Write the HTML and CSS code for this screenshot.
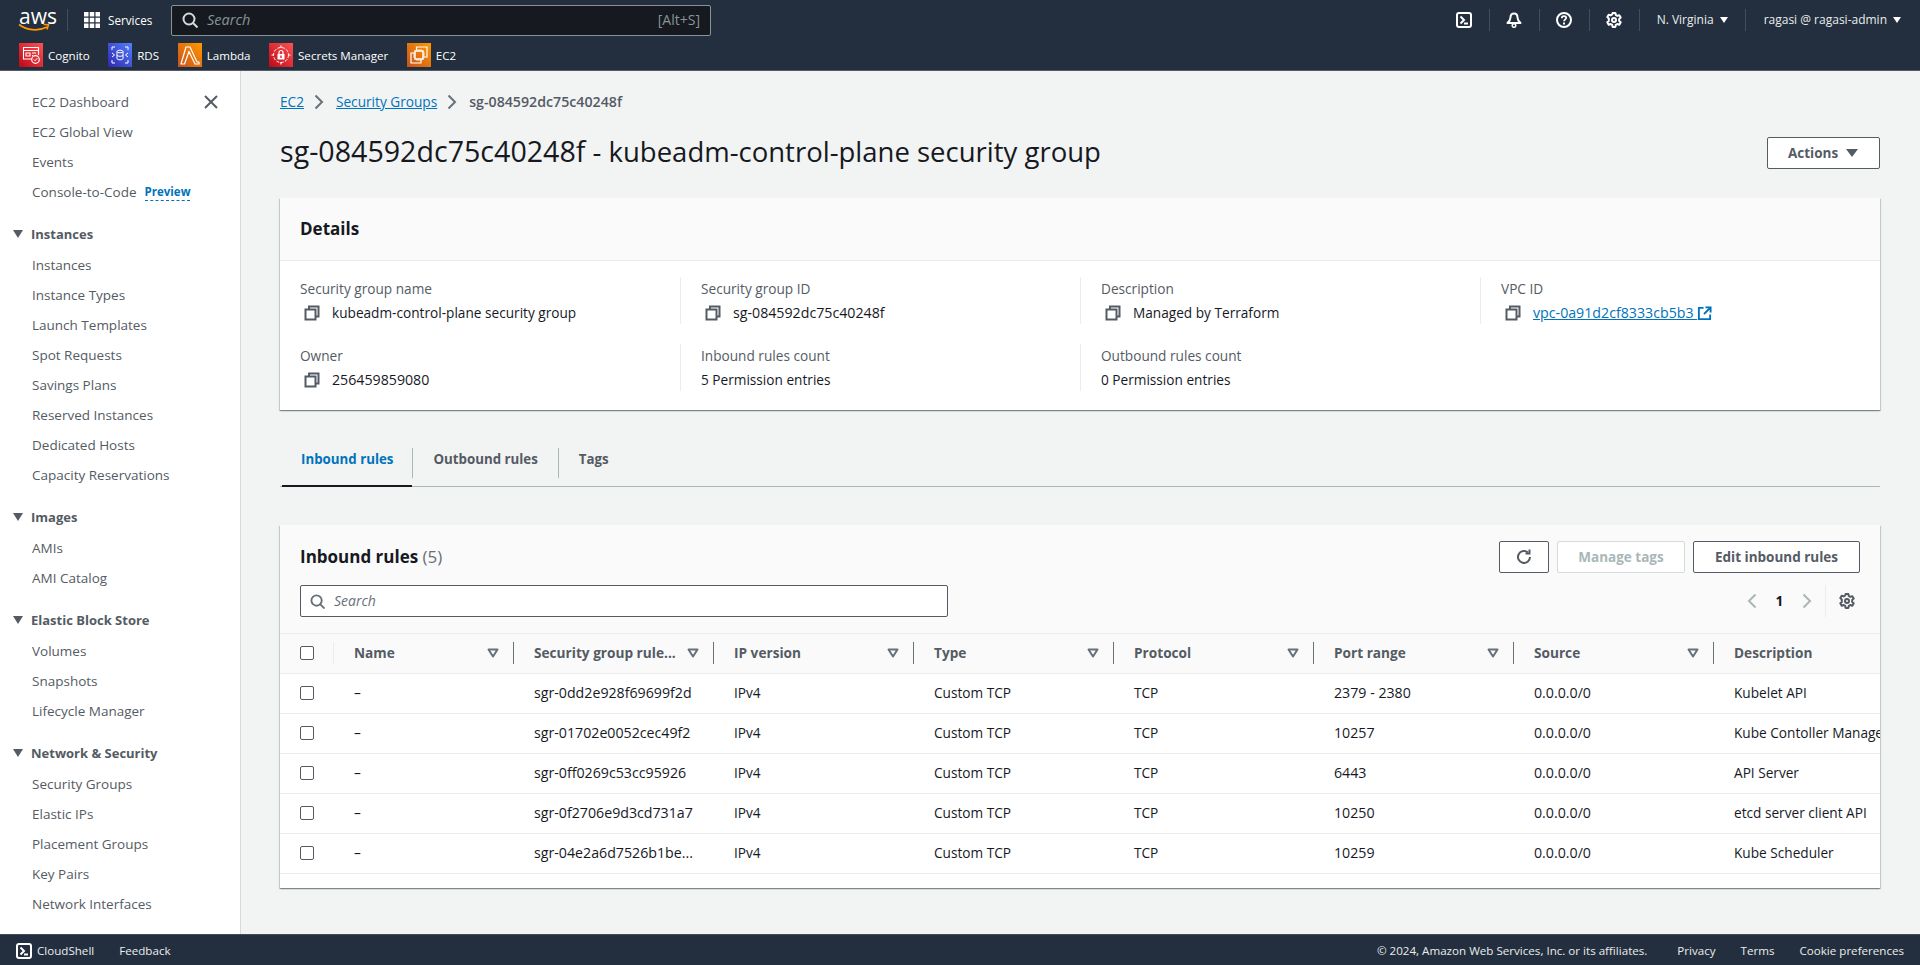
FILE: index.html
```html
<!DOCTYPE html>
<html lang="en">
<head>
  <meta charset="UTF-8" />
  <title>Security Group | EC2</title>
  <link rel="stylesheet" href="styles.css">
</head>
<body>

  <!-- shared icons -->
  <svg class="sprite" xmlns="http://www.w3.org/2000/svg">
    <symbol id="i-copy" viewBox="0 0 16 16"><path d="M5 4.500V1.500h9.500v10h-3M1.500 4.500h10v10h-10z" fill="none" stroke="currentColor" stroke-width="2"/></symbol>
    <symbol id="i-search" viewBox="0 0 16 16"><circle cx="7" cy="7" r="5.500" fill="none" stroke="currentColor" stroke-width="2"/><path d="M11 11l4.500 4.500" stroke="currentColor" stroke-width="2"/></symbol>
    <symbol id="i-gear" viewBox="0 0 16 16"><path d="M6.600 1h2.800l.4 2 1.500.9 2-.7 1.400 2.400-1.500 1.400v1.900l1.500 1.300-1.400 2.500-2-.7-1.500.9-.4 2H6.600l-.4-2-1.500-.9-2 .7-1.400-2.500 1.500-1.300V6.500L1.300 5.100l1.400-2.400 2 .7 1.500-.9z" fill="none" stroke="currentColor" stroke-width="2" stroke-linejoin="round"/><circle cx="8" cy="8" r="2" fill="none" stroke="currentColor" stroke-width="2"/></symbol>
    <symbol id="i-shell" viewBox="0 0 16 16"><rect x="1" y="1" width="14" height="14" rx="2" fill="none" stroke="currentColor" stroke-width="2"/><path d="M4.500 4.500L8 8l-3.500 3.500M8 11.500h4" fill="none" stroke="currentColor" stroke-width="2"/></symbol>
    <symbol id="i-sort" viewBox="0 0 12 10"><path d="M1.500 1.500h9L6 8.500z" fill="none" stroke="currentColor" stroke-width="2" stroke-linejoin="round"/></symbol>
  </svg>

  <header class="topbar">
    <div class="topbar-row">
      <a class="logo">
        <span class="logo-text">aws</span>
        <svg class="logo-smile" viewBox="0 0 32 9"><path d="M1 1.500c8 6 19 7 28 2.500" fill="none" stroke="#f90" stroke-width="1.800"/><path d="M25.500 1.500l5 .3-1.500 4.700" fill="none" stroke="#f90" stroke-width="1.500"/></svg>
      </a>
      <span class="top-divider logo-divider"></span>
      <a class="services">
        <svg class="grid-icon" viewBox="0 0 16 16"><g fill="#fff"><rect width="4.500" height="4.500"/><rect x="5.750" width="4.500" height="4.500"/><rect x="11.500" width="4.500" height="4.500"/><rect y="5.750" width="4.500" height="4.500"/><rect x="5.750" y="5.750" width="4.500" height="4.500"/><rect x="11.500" y="5.750" width="4.500" height="4.500"/><rect y="11.500" width="4.500" height="4.500"/><rect x="5.750" y="11.500" width="4.500" height="4.500"/><rect x="11.500" y="11.500" width="4.500" height="4.500"/></g></svg>
        Services
      </a>
      <div class="top-search">
        <svg class="top-search-icon"><use href="#i-search"/></svg>
        <span class="top-search-text">Search</span>
        <span class="top-search-key">[Alt+S]</span>
      </div>
      <div class="top-actions">
        <svg class="top-icon"><use href="#i-shell"/></svg>
        <span class="top-divider"></span>
        <svg class="top-icon" viewBox="0 0 16 16"><path d="M8 1.500c2.500 0 3.500 2 3.500 4 0 2 1 3.500 3 5.500h-13c2-2 3-3.500 3-5.500 0-2 1-4 3.500-4z" fill="none" stroke="#fff" stroke-width="2" stroke-linejoin="round"/><circle cx="8" cy="13.500" r="1.800" fill="none" stroke="#fff" stroke-width="1.500"/></svg>
        <span class="top-divider"></span>
        <svg class="top-icon" viewBox="0 0 16 16"><circle cx="8" cy="8" r="7" fill="none" stroke="#fff" stroke-width="2"/><path d="M5.800 6.200C5.800 4.900 6.800 4.200 8 4.200s2.200.7 2.200 1.900C10.200 7.500 8 7.600 8 9.300" fill="none" stroke="#fff" stroke-width="1.700"/><rect x="7" y="10.500" width="2" height="2" fill="#fff"/></svg>
        <span class="top-divider"></span>
        <svg class="top-icon"><use href="#i-gear"/></svg>
        <span class="top-divider"></span>
        <span class="top-menu region">N. Virginia <i class="caret"></i></span>
        <span class="top-divider"></span>
        <span class="top-menu user">ragasi @ ragasi-admin <i class="caret"></i></span>
      </div>
    </div>
    <div class="topbar-row favs">
      <a class="fav">
        <svg class="fav-icon" viewBox="0 0 24 24"><defs><linearGradient id="g-red" x1="0" y1="1" x2="1" y2="0"><stop offset="0" stop-color="#bd0816"/><stop offset="1" stop-color="#ff5252"/></linearGradient></defs><rect width="24" height="24" fill="url(#g-red)"/><path d="M13 16H4.500V4.500h15V12M4.500 7.500h15M7 10h4v3H7zM13 10h4M13 12.500h1" fill="none" stroke="#fff" stroke-width="1.100"/><circle cx="16.500" cy="16.500" r="3.800" fill="none" stroke="#fff" stroke-width="1.200"/><path d="M14.800 16.500l1.300 1.300 2.200-2.600" fill="none" stroke="#fff"/></svg>
        Cognito
      </a>
      <a class="fav">
        <svg class="fav-icon" viewBox="0 0 24 24"><defs><linearGradient id="g-blue" x1="0" y1="1" x2="1" y2="0"><stop offset="0" stop-color="#2e27ad"/><stop offset="1" stop-color="#527fff"/></linearGradient></defs><rect width="24" height="24" fill="url(#g-blue)"/><ellipse cx="12" cy="8.500" rx="3" ry="1.300" fill="none" stroke="#fff"/><path d="M9 8.500v7c0 1.700 6 1.700 6 0v-7M9 12c0 1.700 6 1.700 6 0M4 7V4h3M20 7V4h-3M4 17v3h3M20 17v3h-3M4 10L6.500 12 4 14M20 10l-2.500 2 2.500 2" fill="none" stroke="#fff"/></svg>
        RDS
      </a>
      <a class="fav">
        <svg class="fav-icon" viewBox="0 0 24 24"><defs><linearGradient id="g-orange" x1="0" y1="1" x2="1" y2="0"><stop offset="0" stop-color="#c8511b"/><stop offset="1" stop-color="#f90"/></linearGradient></defs><rect width="24" height="24" fill="url(#g-orange)"/><path d="M8 4h4l7 15h2v2h-4L11 8.500 6.500 21H3z" fill="none" stroke="#fff" stroke-width="1.200" stroke-linejoin="round"/></svg>
        Lambda
      </a>
      <a class="fav">
        <svg class="fav-icon" viewBox="0 0 24 24"><rect width="24" height="24" fill="url(#g-red)"/><circle cx="12" cy="12" r="7.500" fill="none" stroke="#fff" stroke-dasharray="3 1.500"/><rect x="8.500" y="11" width="7" height="5.500" fill="#fff"/><path d="M10 11V9.500a2 2 0 0 1 4 0V11M12 2.500v2.500M12 19v2.500M2.500 12H5M19 12h2.500" fill="none" stroke="#fff" stroke-width="1.200"/><rect x="11.300" y="12.500" width="1.400" height="2.500" fill="#d6242d"/></svg>
        Secrets Manager
      </a>
      <a class="fav">
        <svg class="fav-icon" viewBox="0 0 24 24"><rect width="24" height="24" fill="url(#g-orange)"/><path d="M9.500 7V4h10.500v10h-3M7 10H4v10h10v-3" fill="none" stroke="#fff" stroke-width="1.200"/><rect x="8" y="8" width="8" height="8" fill="none" stroke="#fff" stroke-width="1.500"/><path d="M10 6v2M12 6v2M14 6v2M10 16v2M12 16v2M14 16v2M6 10h2M6 12h2M6 14h2M16 10h2M16 12h2M16 14h2" stroke="#fff" stroke-width=".8"/></svg>
        EC2
      </a>
    </div>
  </header>

  <div class="layout">
    <nav class="sidebar">
      <div class="nav-item nav-first">EC2 Dashboard
        <svg class="nav-close" viewBox="0 0 14 14"><path d="M1 1l12 12M13 1L1 13" stroke="currentColor" stroke-width="2"/></svg>
      </div>
      <div class="nav-item">EC2 Global View</div>
      <div class="nav-item">Events</div>
      <div class="nav-item">Console-to-Code <span class="preview">Preview</span></div>

      <div class="nav-section"><i class="caret dark"></i>Instances</div>
      <div class="nav-item">Instances</div>
      <div class="nav-item">Instance Types</div>
      <div class="nav-item">Launch Templates</div>
      <div class="nav-item">Spot Requests</div>
      <div class="nav-item">Savings Plans</div>
      <div class="nav-item">Reserved Instances</div>
      <div class="nav-item">Dedicated Hosts</div>
      <div class="nav-item">Capacity Reservations</div>

      <div class="nav-section"><i class="caret dark"></i>Images</div>
      <div class="nav-item">AMIs</div>
      <div class="nav-item">AMI Catalog</div>

      <div class="nav-section"><i class="caret dark"></i>Elastic Block Store</div>
      <div class="nav-item">Volumes</div>
      <div class="nav-item">Snapshots</div>
      <div class="nav-item">Lifecycle Manager</div>

      <div class="nav-section"><i class="caret dark"></i>Network &amp; Security</div>
      <div class="nav-item">Security Groups</div>
      <div class="nav-item">Elastic IPs</div>
      <div class="nav-item">Placement Groups</div>
      <div class="nav-item">Key Pairs</div>
      <div class="nav-item">Network Interfaces</div>
    </nav>

    <main class="main">
      <div class="breadcrumb">
        <a class="link">EC2</a>
        <svg class="crumb-sep" viewBox="0 0 10 16"><path d="M1.500 1.500L8 8l-6.500 6.500" fill="none" stroke="currentColor" stroke-width="2"/></svg>
        <a class="link">Security Groups</a>
        <svg class="crumb-sep" viewBox="0 0 10 16"><path d="M1.500 1.500L8 8l-6.500 6.500" fill="none" stroke="currentColor" stroke-width="2"/></svg>
        <span class="crumb-current">sg-084592dc75c40248f</span>
      </div>

      <div class="page-head">
        <h1><span class="h1-id">sg-084592dc75c40248f</span> - kubeadm-control-plane security group</h1>
        <button class="btn btn-actions">Actions <i class="caret gray"></i></button>
      </div>

      <section class="card">
        <h2 class="card-title">Details</h2>
        <div class="details">
          <div class="field">
            <div class="field-label">Security group name</div>
            <div class="field-value"><svg class="copy"><use href="#i-copy"/></svg>kubeadm-control-plane security group</div>
          </div>
          <div class="field">
            <div class="field-label">Security group ID</div>
            <div class="field-value id"><svg class="copy"><use href="#i-copy"/></svg>sg-084592dc75c40248f</div>
          </div>
          <div class="field">
            <div class="field-label">Description</div>
            <div class="field-value"><svg class="copy"><use href="#i-copy"/></svg>Managed by Terraform</div>
          </div>
          <div class="field">
            <div class="field-label">VPC ID</div>
            <div class="field-value id"><svg class="copy"><use href="#i-copy"/></svg><a class="link vpc-link">vpc-0a91d2cf8333cb5b3 </a>
              <svg class="external" viewBox="0 0 16 16"><path d="M7 2H2v12h12V9M9 1.500h5.500V7M14 2L7.500 8.500" fill="none" stroke="currentColor" stroke-width="2"/></svg>
            </div>
          </div>
          <div class="field">
            <div class="field-label">Owner</div>
            <div class="field-value id"><svg class="copy"><use href="#i-copy"/></svg>256459859080</div>
          </div>
          <div class="field">
            <div class="field-label">Inbound rules count</div>
            <div class="field-value">5 Permission entries</div>
          </div>
          <div class="field">
            <div class="field-label">Outbound rules count</div>
            <div class="field-value">0 Permission entries</div>
          </div>
        </div>
      </section>

      <div class="tabs">
        <a class="tab active">Inbound rules</a>
        <a class="tab">Outbound rules</a>
        <a class="tab">Tags</a>
      </div>

      <section class="card rules">
        <div class="rules-head">
          <div class="rules-row">
            <h2 class="rules-title">Inbound rules <span class="count">(5)</span></h2>
            <div class="rules-buttons">
              <button class="btn btn-icon">
                <svg viewBox="0 0 16 16"><path d="M14 8a6 6 0 1 1-2-4.500" fill="none" stroke="currentColor" stroke-width="2"/><path d="M13.500 .5v4h-4" fill="none" stroke="currentColor" stroke-width="2"/></svg>
              </button>
              <button class="btn btn-disabled">Manage tags</button>
              <button class="btn btn-edit">Edit inbound rules</button>
            </div>
          </div>
          <div class="rules-row filter-row">
            <div class="table-search">
              <svg><use href="#i-search"/></svg>
              <span>Search</span>
            </div>
            <div class="pager">
              <svg class="pager-arrow" viewBox="0 0 10 16"><path d="M8.500 1.500L2 8l6.500 6.500" fill="none" stroke="currentColor" stroke-width="2"/></svg>
              <span class="pager-num">1</span>
              <svg class="pager-arrow" viewBox="0 0 10 16"><path d="M1.500 1.500L8 8l-6.500 6.500" fill="none" stroke="currentColor" stroke-width="2"/></svg>
              <span class="pager-divider"></span>
              <svg class="pager-gear"><use href="#i-gear"/></svg>
            </div>
          </div>
        </div>

        <div class="table-wrap">
          <table class="rules-table">
            <thead>
              <tr>
                <th class="col-check"><span class="check-cell"><i class="checkbox"></i></span></th>
                <th class="col-name"><div class="th-inner">Name<svg class="sort"><use href="#i-sort"/></svg></div></th>
                <th><div class="th-inner"><span class="th-label">Security group rule...</span><svg class="sort"><use href="#i-sort"/></svg></div></th>
                <th><div class="th-inner">IP version<svg class="sort"><use href="#i-sort"/></svg></div></th>
                <th><div class="th-inner">Type<svg class="sort"><use href="#i-sort"/></svg></div></th>
                <th><div class="th-inner">Protocol<svg class="sort"><use href="#i-sort"/></svg></div></th>
                <th><div class="th-inner">Port range<svg class="sort"><use href="#i-sort"/></svg></div></th>
                <th><div class="th-inner">Source<svg class="sort"><use href="#i-sort"/></svg></div></th>
                <th class="col-desc"><div class="th-inner last">Description</div></th>
              </tr>
            </thead>
            <tbody>
              <tr>
                <td class="col-check"><i class="checkbox"></i></td><td>–</td><td class="id">sgr-0dd2e928f69699f2d</td><td>IPv4</td><td>Custom TCP</td><td>TCP</td><td class="id">2379 - 2380</td><td class="id">0.0.0.0/0</td><td>Kubelet API</td>
              </tr>
              <tr>
                <td class="col-check"><i class="checkbox"></i></td><td>–</td><td class="id">sgr-01702e0052cec49f2</td><td>IPv4</td><td>Custom TCP</td><td>TCP</td><td class="id">10257</td><td class="id">0.0.0.0/0</td><td>Kube Contoller Manager</td>
              </tr>
              <tr>
                <td class="col-check"><i class="checkbox"></i></td><td>–</td><td class="id">sgr-0ff0269c53cc95926</td><td>IPv4</td><td>Custom TCP</td><td>TCP</td><td class="id">6443</td><td class="id">0.0.0.0/0</td><td>API Server</td>
              </tr>
              <tr>
                <td class="col-check"><i class="checkbox"></i></td><td>–</td><td class="id">sgr-0f2706e9d3cd731a7</td><td>IPv4</td><td>Custom TCP</td><td>TCP</td><td class="id">10250</td><td class="id">0.0.0.0/0</td><td>etcd server client API</td>
              </tr>
              <tr>
                <td class="col-check"><i class="checkbox"></i></td><td>–</td><td class="id">sgr-04e2a6d7526b1be...</td><td>IPv4</td><td>Custom TCP</td><td>TCP</td><td class="id">10259</td><td class="id">0.0.0.0/0</td><td>Kube Scheduler</td>
              </tr>
            </tbody>
          </table>
        </div>
      </section>
    </main>
  </div>

  <footer class="footer">
    <svg class="footer-shell"><use href="#i-shell"/></svg>
    <span class="footer-shell-text">CloudShell</span>
    <span class="footer-feedback">Feedback</span>
    <span class="footer-copy">© 2024, Amazon Web Services, Inc. or its affiliates.</span>
    <span class="footer-link first">Privacy</span>
    <span class="footer-link">Terms</span>
    <span class="footer-link">Cookie preferences</span>
  </footer>

</body>
</html>
```

FILE: styles.css
```css
* {
  box-sizing: border-box;
}

body {
  margin: 0;
  height: 965px;
  display: flex;
  flex-direction: column;
  overflow: hidden;
  font-family: "Open Sans", "Liberation Sans", sans-serif;
  font-size: 13.65px;
  line-height: 20px;
  color: #16191f;
  background: #f2f3f3;
}

.sprite {
  display: none;
}

/* top bar */
.topbar {
  height: 71px;
  flex: none;
  background: #232f3e;
  border-bottom: 1px solid #545b64;
  color: #fff;
  font-size: 12px;
}

.topbar-row {
  display: flex;
  align-items: center;
  height: 40px;
  padding-left: 18px;
}

.logo {
  position: relative;
  width: 32px;
  height: 30px;
}

.logo-text {
  display: block;
  margin: -1px 0 0 1px;
  font-size: 21px;
  line-height: 24px;
}

.logo-smile {
  position: absolute;
  left: 0;
  top: 18px;
  width: 32px;
  height: 9px;
}

.top-divider {
  width: 1px;
  height: 22px;
  background: #414d5c;
}

.logo-divider {
  margin-left: 17px;
}

.services {
  display: flex;
  align-items: center;
  margin-left: 16px;
  width: 87px;
  font-size: 11.7px;
}

.grid-icon {
  width: 16px;
  height: 16px;
  margin-right: 8px;
}

.top-search {
  display: flex;
  align-items: center;
  width: 540px;
  height: 31px;
  padding: 0 10px;
  background: #16191f;
  border: 1px solid #879596;
  border-radius: 2px;
}

.top-search-icon {
  width: 16px;
  height: 16px;
  color: #d5dbdb;
  margin-right: 9px;
}

.top-search-text {
  flex: 1;
  font-size: 14.5px;
  font-style: italic;
  color: #879596;
}

.top-search-key {
  font-size: 14px;
  color: #879596;
}

.top-actions {
  display: flex;
  align-items: center;
  margin-left: auto;
}

.top-icon {
  width: 16px;
  height: 16px;
  color: #fff;
  margin: 0 16.5px;
}

.top-menu {
  display: flex;
  align-items: center;
  color: #eaeded;
}

.region {
  padding: 0 17px;
}

.user {
  padding: 0 19px 0 18px;
}

.caret {
  display: inline-block;
  width: 0;
  height: 0;
  margin-left: 6px;
  border-left: 4.5px solid transparent;
  border-right: 4.5px solid transparent;
  border-top: 6px solid #fff;
}

.caret.dark {
  margin: 0 8px 0 0;
  border-top-color: #545b64;
  border-top-width: 8px;
  border-left-width: 5px;
  border-right-width: 5px;
}

.caret.gray {
  margin-left: 8px;
  border-left-width: 6px;
  border-right-width: 6px;
  border-top: 8px solid #545b64;
}

.favs {
  height: 30px;
  padding-left: 19px;
}

.fav {
  display: flex;
  align-items: center;
  padding-top: 2px;
  margin-right: 18.5px;
  font-size: 11.6px;
}

.fav-icon {
  width: 24px;
  height: 24px;
  margin: -2px 5px 0 0;
}

/* page layout */
.layout {
  flex: 1;
  display: flex;
  min-height: 0;
}

.sidebar {
  width: 241px;
  flex: none;
  padding-top: 16px;
  background: #fff;
  border-right: 1px solid #d5dbdb;
  color: #545b64;
  font-size: 13.5px;
}

.nav-item {
  display: flex;
  align-items: center;
  height: 30px;
  padding-left: 32px;
}

.nav-first {
  justify-content: space-between;
  padding-right: 22px;
}

.nav-close {
  width: 14px;
  height: 14px;
}

.preview {
  margin-left: 8px;
  font-size: 11.5px;
  font-weight: 700;
  line-height: 16px;
  color: #0073bb;
  border-bottom: 1px dashed #0073bb;
}

.nav-section {
  display: flex;
  align-items: center;
  height: 30px;
  margin: 12px 0 1px;
  padding-left: 13px;
  font-size: 13px;
  font-weight: 700;
}

.main {
  flex: 1;
  min-width: 0;
  padding: 20px 40px 0 39px;
}

.link {
  color: #0073bb;
  text-decoration: underline;
}

.vpc-link {
  white-space: pre;
}

.id {
  font-size: 14.2px;
}

.breadcrumb {
  display: flex;
  align-items: center;
  height: 22px;
}

.crumb-sep {
  width: 10px;
  height: 16px;
  margin: 0 12px 0 10px;
  color: #687078;
}

.crumb-current {
  font-size: 14.2px;
  font-weight: 600;
  color: #545b64;
}

.page-head {
  display: flex;
  align-items: center;
  justify-content: space-between;
  height: 36px;
  margin-top: 20px;
  margin-bottom: 29px;
}

h1 {
  margin: 0;
  font-size: 27.5px;
  font-weight: 400;
  line-height: 36px;
}

.h1-id {
  font-size: 28.6px;
}

.btn {
  height: 32px;
  padding: 0 20px;
  background: #fff;
  border: 1px solid #545b64;
  border-radius: 2px;
  color: #545b64;
  font: 700 13.5px "Open Sans", "Liberation Sans", sans-serif;
}

.btn-actions {
  display: flex;
  align-items: center;
  width: 113px;
  margin-top: 4px;
}

.btn-icon {
  width: 50px;
  padding: 0;
}

.btn-icon svg {
  display: block;
  width: 16px;
  height: 16px;
  margin: 0 auto;
}

.btn-disabled {
  width: 128px;
  padding: 0;
  border-color: #d5dbdb;
  color: #aab7b8;
}

.btn-edit {
  width: 167px;
  padding: 0;
}

.card {
  background: #fff;
  box-shadow: 0 1px 1px 0 rgba(0, 28, 36, 0.3), 1px 1px 1px 0 rgba(0, 28, 36, 0.15), -1px 1px 1px 0 rgba(0, 28, 36, 0.15);
}

.card-title {
  height: 63px;
  margin: 0;
  padding: 20px 20px 0;
  background: #fafafa;
  border-bottom: 1px solid #eaeded;
  font-size: 17px;
  font-weight: 700;
  line-height: 22px;
}

.details {
  display: grid;
  grid-template-columns: repeat(4, 1fr);
  row-gap: 20px;
  padding: 16px 0 19px;
}

.field {
  height: 47px;
  padding: 2px 0 0 20px;
  border-left: 1px solid #eaeded;
}

.field:nth-child(4n + 1) {
  border-left: none;
}

.field-label {
  color: #545b64;
}

.field-value {
  display: flex;
  align-items: center;
  margin-top: 4px;
}

.copy {
  width: 16px;
  height: 16px;
  margin: 0 12px 0 4px;
  color: #545b64;
}

.external {
  width: 15px;
  height: 15px;
  color: #0073bb;
}

/* tabs */
.tabs {
  display: flex;
  height: 51px;
  margin: 26px 0 38px;
  padding-left: 2px;
  border-bottom: 1px solid #aab7b8;
}

.tab {
  display: flex;
  align-items: center;
  height: 50px;
  padding: 0 20px 5px 21px;
  font-size: 13.3px;
  font-weight: 700;
  color: #545b64;
  position: relative;
}

.tab + .tab::before {
  content: "";
  position: absolute;
  left: 0;
  top: 12px;
  height: 30px;
  width: 1px;
  background: #aab7b8;
}

.tab.active {
  padding: 0 19px 4px;
  color: #0073bb;
  border-bottom: 2px solid #16191f;
  height: 51px;
}

/* rules table */
.rules {
  overflow: hidden;
  padding-bottom: 14px;
}

.rules-head {
  padding: 16px 20px;
  background: #fafafa;
  border-bottom: 1px solid #eaeded;
}

.rules-row {
  display: flex;
  align-items: center;
  justify-content: space-between;
  height: 32px;
}

.filter-row {
  margin-top: 12px;
}

.rules-title {
  margin: 0;
  font-size: 17px;
  font-weight: 700;
  line-height: 22px;
}

.count {
  font-weight: 400;
  color: #687078;
}

.rules-buttons {
  display: flex;
  gap: 8px;
}

.table-search {
  display: flex;
  align-items: center;
  width: 648px;
  height: 32px;
  padding-left: 9px;
  background: #fff;
  border: 1px solid #545b64;
  border-radius: 2px;
  color: #687078;
  font-size: 14px;
  font-style: italic;
}

.table-search svg {
  width: 15px;
  height: 15px;
  margin-right: 9px;
}

.pager {
  display: flex;
  align-items: center;
  height: 32px;
  padding-right: 5px;
}

.pager-arrow {
  width: 10px;
  height: 16px;
  color: #aab7b8;
}

.pager-num {
  width: 45px;
  text-align: center;
  font-weight: 700;
}

.pager-divider {
  width: 1px;
  height: 32px;
  margin: 0 13px;
  background: #eaeded;
}

.pager-gear {
  width: 16px;
  height: 16px;
  color: #545b64;
}

.table-wrap {
  overflow: hidden;
}

.rules-table {
  width: 1754px;
  table-layout: fixed;
  border-collapse: collapse;
}

.rules-table th {
  width: 200px;
  height: 39px;
  padding: 0;
  background: #fafafa;
  border-bottom: 1px solid #eaeded;
  color: #545b64;
  font-weight: 700;
  text-align: left;
}

.rules-table th.col-check {
  width: 54px;
}

.rules-table th.col-name {
  width: 180px;
}

.rules-table th.col-desc {
  width: 320px;
}

.th-inner {
  display: flex;
  align-items: center;
  justify-content: space-between;
  height: 22px;
  padding: 0 14px 0 20px;
  border-right: 1px solid #687078;
}

.th-inner.last {
  border-right: none;
}

.th-label {
  white-space: nowrap;
}

.sort {
  width: 12px;
  height: 10px;
  color: #687078;
}

.check-cell {
  display: flex;
  align-items: center;
  height: 22px;
  border-right: 1px solid #eaeded;
}

.checkbox {
  display: block;
  width: 14px;
  height: 14px;
  background: #fff;
  border: 1px solid #545b64;
  border-radius: 2px;
  margin-left: 20px;
}

.rules-table td {
  height: 40px;
  padding: 0 0 0 20px;
  border-bottom: 1px solid #eaeded;
  white-space: nowrap;
  overflow: hidden;
}

.rules-table td.id {
  font-size: 14.2px;
}

.rules-table td.col-check {
  padding: 0;
}

/* footer */
.footer {
  display: flex;
  align-items: center;
  flex: none;
  height: 31px;
  padding: 1px 16px 0;
  background: #232f3e;
  border-top: 1px solid #414d5c;
  color: #eaeded;
  font-size: 11.6px;
}

.footer-shell {
  width: 16px;
  height: 16px;
  color: #fff;
}

.footer-shell-text {
  margin-left: 5px;
}

.footer-feedback {
  margin-left: 25px;
}

.footer-copy {
  margin-left: auto;
}

.footer-link {
  margin-left: 25px;
}

.footer-link.first {
  margin-left: 30px;
}
```
